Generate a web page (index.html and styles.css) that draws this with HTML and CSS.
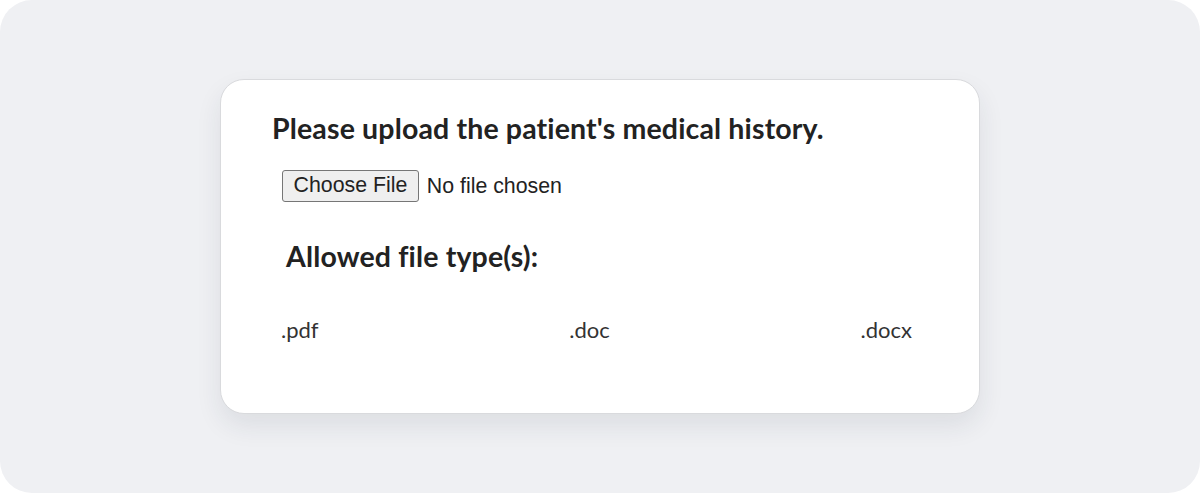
FILE: index.html
```html
<!DOCTYPE html>
<html lang="en">
<head>
<meta charset="utf-8">
<title>Upload medical history</title>
<link rel="stylesheet" href="styles.css">
</head>
<body>
<div class="frame">
  <div class="card">
    <h2 class="title">Please upload the patient's medical history.</h2>
    <div class="file-row">
      <input class="file-input" type="file" accept=".pdf,.doc,.docx">
    </div>
    <h3 class="subtitle">Allowed file type(s):</h3>
    <div class="types">
      <span class="type">.pdf</span>
      <span class="type">.doc</span>
      <span class="type">.docx</span>
    </div>
  </div>
</div>
</body>
</html>
```

FILE: styles.css
```css
html, body {
  margin: 0;
  padding: 0;
  background: #ffffff;
}
.frame {
  width: 1200px;
  height: 493px;
  background: #eff0f3;
  border-radius: 32px;
  display: flex;
  align-items: center;
  justify-content: center;
}
.card {
  box-sizing: border-box;
  width: 760px;
  background: #ffffff;
  border: 1px solid #d9dadd;
  border-radius: 24px;
  box-shadow: 0 12px 26px rgba(30, 40, 70, 0.09);
  padding: 31px 67px 69px 51px;
  font-family: Lato, "Open Sans", sans-serif;
  color: #222222;
}
.title {
  margin: 0;
  font-size: 28.5px;
  font-weight: 700;
  letter-spacing: 0.15px;
  line-height: 1.2;
}
.file-row {
  display: flex;
  align-items: flex-start;
  margin-top: 24.5px;
  padding-left: 10px;
}
.file-input {
  height: 32px;
  font-family: "Liberation Sans", Arial, sans-serif;
  font-size: 21.33px;
  color: #222222;
}
.file-input::file-selector-button {
  box-sizing: border-box;
  height: 32px;
  font: inherit;
  padding: 0 10.5px;
  margin-right: 8px;
  border: 1px solid #767676;
  border-radius: 3px;
  background: #efefef;
  color: #222222;
}
.subtitle {
  margin: 37px 0 0 0;
  padding-left: 14px;
  font-size: 28.5px;
  font-weight: 700;
  letter-spacing: 0.15px;
  line-height: 1.2;
}
.types {
  margin-top: 44.5px;
  padding-left: 9px;
  display: flex;
  justify-content: space-between;
  font-size: 22px;
  line-height: 1.2;
  color: #333333;
}
```
